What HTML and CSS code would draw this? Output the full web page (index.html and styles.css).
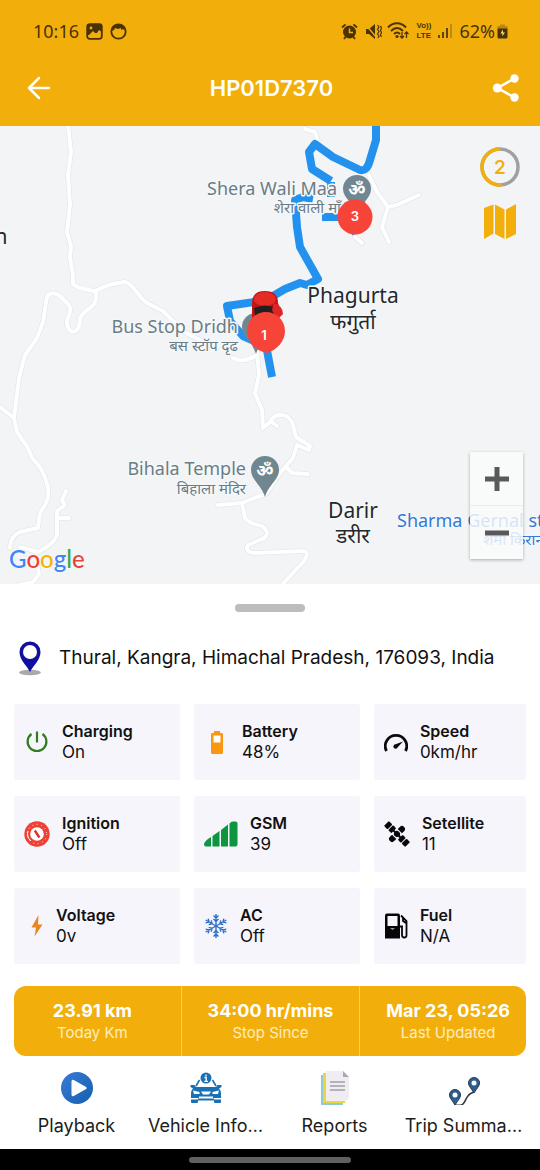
FILE: index.html
```html
<!DOCTYPE html>
<html lang="en">
<head>
<meta charset="utf-8">
<meta name="viewport" content="width=device-width, initial-scale=1">
<title>HP01D7370</title>
<link rel="stylesheet" href="styles.css">
</head>
<body>
<div class="screen">
  <header class="top">
    <div class="status">
      <span class="clock">10:16</span>
      <svg width="17" height="17" viewBox="0 0 17 17"><rect x="1.2" y="1.2" width="14.6" height="14.6" rx="2.5" fill="none" stroke="#4a3205" stroke-width="1.8"/><path d="M1 1h15v8l-3-2-2 3H9L7 8l-4 4-2 0z" fill="#4a3205"/><circle cx="5" cy="5" r="1.4" fill="#f2af0c"/></svg>
      <svg width="17" height="17" viewBox="0 0 17 17"><circle cx="8.500" cy="8.500" r="7.200" fill="none" stroke="#4a3205" stroke-width="1.8"/><path d="M2 8C3 3 4 2 8.500 1.500 13 2 14 3 15 8l-2-2-2 1V5l-3 1-3-1-1 2z" fill="#4a3205"/></svg>
      <span class="spacer"></span>
      <svg width="17" height="17" viewBox="0 0 17 17"><circle cx="8.500" cy="9" r="6.500" fill="#4a3205"/><path d="M1 4.500 4.500 1.300M16 4.500l-3.500-3.200M3 16l1.500-2M14 16l-1.500-2" stroke="#4a3205" stroke-width="1.800"/><path d="M8.500 5.500V9.500h3.500" fill="none" stroke="#f2af0c" stroke-width="1.500"/></svg>
      <svg class="gap-mute" width="17" height="17" viewBox="0 0 17 17"><path d="M1 6h3l6-5v15l-6-5H1z" fill="#4a3205"/><path d="m1 2 10 12" stroke="#f2af0c" stroke-width="1.200"/><path d="M12.500 2l1.500 2-1.500 2.500 1.500 2-1.500 2.500 1.500 2-1 2M15.500 3l1 2-1 2.500 1 2-1 2.500 1 2" fill="none" stroke="#4a3205" stroke-width="1.200"/></svg>
      <svg width="22" height="18" viewBox="0 0 22 18"><path d="M1 5.500C6-.2 14-.2 19 5.500M4 9c4-4 8-4 12 0M7 12c2-2 4-2 6 0" fill="none" stroke="#4a3205" stroke-width="1.900"/><circle cx="10" cy="14.500" r="1.600" fill="#4a3205"/><path d="M15 10v6m-2-2 2 2 2-2M19.500 16v-6m-2 2 2-2 2 2" fill="none" stroke="#4a3205" stroke-width="1.300"/></svg>
      <span class="volte"><span>Vo))</span><span>LTE</span></span>
      <svg width="14" height="16" viewBox="0 0 14 16"><path d="M1 12v3M5 9v6M9 5v10" stroke="#4a3205" stroke-width="1.700"/><path d="M13 1v14" stroke="#b78410" stroke-width="1.700"/></svg>
      <span class="percent">62%</span>
      <svg class="batt" width="11" height="16" viewBox="0 0 11 16"><path d="M3 1.500h5V3h2.500v3H.5V3H3z" fill="#b98712"/><path d="M.5 5.500h10V14a1.500 1.500 0 0 1-1.500 1.500H2A1.500 1.500 0 0 1 .5 14z" fill="#4a3205"/><path d="M6 6.500 3.500 10.500h2L5 13.500l3-4H6z" fill="#f7dc94"/></svg>
    </div>
    <div class="appbar">
      <button class="icon-btn" aria-label="Back"><svg width="24" height="24" viewBox="0 0 24 24" fill="none" stroke="#fff" stroke-width="2.500" stroke-linecap="round" stroke-linejoin="round"><path d="M22 12H2M12 2 2 12l10 10"/></svg></button>
      <h1 class="title">HP01D7370</h1>
      <button class="icon-btn" aria-label="Share"><svg width="28" height="28" viewBox="0 0 28 28" fill="#fff"><path d="M22.500 4.500 5.500 14l17 9.500" fill="none" stroke="#fff" stroke-width="2.500"/><circle cx="22.500" cy="4.500" r="4.200"/><circle cx="5.300" cy="14" r="4.500"/><circle cx="22.500" cy="23.500" r="4.200"/></svg></button>
    </div>
  </header>

  <main class="map">
    <svg class="canvas" viewBox="0 126 540 458" preserveAspectRatio="xMidYMid slice">
      <defs>
        <g id="roads" fill="none" stroke-linecap="round" stroke-linejoin="round">
          <path d="M68 124 71 152 68 175 70 205 67 232 71 246 70 258 73 275 73 284Q78 289 95 291 110 283 125 282C133 283 138 297 147 303L163 311 174 322 184 332 200 340"/>
          <path d="M95 291Q99 301 90 308 78 316 80 322 78 332 72 332 66 328 67 320 72 310 69 305L60 296Q51 290 47 297L43 322 37 338 25 355 19 378 14 418 17 432 28 448 32 458 40 467C47 480 53 495 43 508L40 513 38 528 20 532Q10 536 10 548M0 407l14 11"/>
          <path d="M66 491 62 500 65 505 57 511 57 535Q53 544 45 548L38 552 20 547M57 518h12M37 562l2 12-6 8-14 3"/>
          <path d="M233 358c8 5 16 2 24-3M257 350 259 375 255 393 262 410 263 428 270 422C275 412 289 412 293 425L296 437 310 446 309 450 297 445 293 458 280 473 266 494 257 497 242 503 218 505M272 422l5 4M287 468l5 5 16 1M242 503 245 518Q250 524 262 526 272 534 262 539L248 545Q244 552 255 553L305 551Q309 554 304 561L281 586"/>
          <path d="M305 129 315 132 318 142M367 171 377 192 388 207 397 205 410 199 419 195M388 207 382 227 389 242M355 237l7 6"/>
        </g>
      </defs>
      <rect y="126" width="540" height="458" fill="#f2f4f5"/>
      <use href="#roads" stroke="#dfe2e5" stroke-width="5"/>
      <use href="#roads" stroke="#fff" stroke-width="4"/>
      <g class="route">
        <path d="M376 120v20l-6 20q-3 12-10 10l-27-13-18-13-6 8 3 17 19 12M331 182v15M313 199l-10-2-8 3 2 27 3 20 18 32-11 6-7-2-15 6-12 7-12 5-34 5 3 15 13 15 20 9M322 217h28l6 17"/>
        <path d="m266 345 6 32"/>
      </g>
      <g class="place end">
        <text x="337" y="195">Shera Wali Maa</text><text class="hindi" x="341" y="213">शेरा वाली माँ</text>
        <text x="238" y="333">Bus Stop Dridh</text><text class="hindi" x="238" y="351">बस स्टॉप दृढ</text>
        <text x="246" y="475">Bihala Temple</text><text class="hindi" x="246" y="494">बिहाला मंदिर</text>
      </g>
      <g class="place town">
        <text x="353" y="303">Phagurta</text><text x="353" y="329">फगुर्ता</text>
        <text x="353" y="518">Darir</text><text x="353" y="543">डरीर</text>
        <text x="1" y="244">n</text>
      </g>
      <g class="place shop"><text x="397" y="527">Sharma Gernal st</text><text class="hindi" x="483" y="545">शर्मा किरान</text></g>
      <g fill="#708690">
        <path d="M343 189a14 14 0 1 1 28 0c0 9-9 13-14 25-4-12-14-16-14-25z"/>
        <path d="M251 470a14 14 0 1 1 28 0c0 10-10 14-14 27-4-13-14-17-14-27z"/>
        <path d="M242 327a14 14 0 1 1 28 0c0 9-10 14-14 27-4-13-14-18-14-27z"/>
      </g>
      <text class="om" x="357" y="196">ॐ</text><text class="om" x="265" y="477">ॐ</text>
      <path d="M252 303q0-12 13-12t13 12l4 12-30 6z" fill="#c41315"/>
      <ellipse cx="265" cy="299" rx="11" ry="7" fill="#e52b25"/>
      <path d="M254 308q11-5 23 0l-1 8h-21z" fill="#252020"/>
      <path d="M274 303q9 3 9 11l-6 6-5-10z" fill="#e22522"/>
      <circle cx="355" cy="217" r="17.500" fill="#f64438"/><path d="M247 331a19 19 0 1 1 38 0c0 10-8 19-18 22-11-2-20-11-20-22z" fill="#f64438"/>
      <text class="pin" x="355" y="221">3</text><text class="pin" x="264" y="340">1</text>
    </svg>
    <div class="ring">
      <svg width="40" height="40" viewBox="0 0 40 40" fill="none" stroke-width="3.500"><circle cx="20" cy="20" r="18" stroke="#a0a0a0"/><path d="M20 2a18 18 0 0 0 0 36h2" stroke="#f2af0c"/></svg>
      <span class="ring-num">2</span>
    </div>
    <button class="layers" aria-label="Map type"><svg width="34" height="36" viewBox="0 0 34 36" fill="#f2af0c"><path d="M1 4 10.500.5v29L1 35zM12 .5l9.500 5V35L12 30zM23 5.500 33 0v30l-10 5z"/></svg></button>
    <div class="zoom">
      <button class="zoom-btn" aria-label="Zoom in"><svg width="24" height="24" viewBox="0 0 24 24"><path d="M12 0v24M0 12h24" stroke="#595959" stroke-width="5"/></svg></button>
      <button class="zoom-btn" aria-label="Zoom out"><svg width="24" height="24" viewBox="0 0 24 24"><path d="M0 12h24" stroke="#595959" stroke-width="5"/></svg></button>
    </div>
    <div class="google"><span class="b">G</span><span class="r">o</span><span class="y">o</span><span class="b">g</span><span class="g">l</span><span class="r">e</span></div>
  </main>

  <section class="sheet">
    <div class="handle"></div>
    <div class="address">
      <svg width="24" height="36" viewBox="0 0 24 36"><ellipse cx="12" cy="32.500" rx="11" ry="2.800" fill="#aaa"/><path d="M12 1.500A10.500 10.500 0 0 0 1.500 12C1.500 20 8.500 25 12 32c3.500-7 10.500-12 10.500-20A10.500 10.500 0 0 0 12 1.500z" fill="#1010a0"/><circle cx="12" cy="12" r="7" fill="#fff"/></svg>
      <span>Thural, Kangra, Himachal Pradesh, 176093, India</span>
    </div>
    <div class="cards">
      <div class="card"><svg width="26" height="26" viewBox="0 0 26 26" fill="none" stroke="#2f7d1c" stroke-width="2.200"><path d="M13 2.500v11M7.500 5a9.400 9.400 0 1 0 11 0"/></svg><div><h2>Charging</h2><p>On</p></div></div>
      <div class="card"><svg width="26" height="26" viewBox="0 0 26 26"><path d="M10 2h6v2h1.500Q19 4 19 5.500v18Q19 25 17.500 25h-9Q7 25 7 23.500v-18Q7 4 8.500 4H10z" fill="#fa960f"/><path d="M9.500 6.500h7v7h-7z" fill="#fff"/></svg><div><h2>Battery</h2><p>48%</p></div></div>
      <div class="card"><svg width="24" height="26" viewBox="0 0 24 26"><path d="M2.500 22A10.700 10.700 0 1 1 21.500 22" fill="none" stroke="#0a0a0f" stroke-width="2.800"/><path d="M19 12.500 13.500 18.500a2.200 2.200 0 1 1-2-3.200z" fill="#0a0a0f"/></svg><div><h2>Speed</h2><p>0km/hr</p></div></div>
      <div class="card"><svg width="26" height="26" viewBox="0 0 26 26"><circle cx="13" cy="13" r="12.700" fill="#ed4137"/><circle cx="13" cy="13" r="9.700" fill="none" stroke="#fff" stroke-width=".9" stroke-dasharray="1 3.500"/><circle cx="13" cy="13" r="6.800" fill="#fff"/><path d="m10.800 9.500 4.600 7" stroke="#d8372d" stroke-width="2.400"/><path d="M4 10a9.500 9.500 0 0 0 3 10" stroke="#fff" fill="none"/></svg><div><h2>Ignition</h2><p>Off</p></div></div>
      <div class="card"><svg width="34" height="26" viewBox="0 0 34 26" fill="#0b963f"><path d="M7 16v9.500H2Q0 25.500 0 23.500 0 20 7 16zM8.500 15l7-5v15.500h-7zM17 9l7-5.500v22h-7zM25.500 2.500Q27 .5 29 .5h2.500Q33.500.5 33.500 2.500v21q0 2-2 2h-6z"/></svg><div><h2>GSM</h2><p>39</p></div></div>
      <div class="card"><svg width="26" height="26" viewBox="0 0 26 26"><g transform="rotate(45 13 13)" fill="#08080c"><rect x="-2" y="9.500" width="5" height="7" rx="1"/><rect x="4" y="9.500" width="4.500" height="7" rx="1"/><rect x="17.500" y="9.500" width="4.500" height="7" rx="1"/><rect x="23" y="9.500" width="5" height="7" rx="1"/><circle cx="13" cy="13" r="3"/><path d="M10 9V6q0-3 3-3t3 3v3zM10 17v3q0 3 3 3t3-3v-3zM8 12h10v2H8z"/></g></svg><div><h2>Setellite</h2><p>11</p></div></div>
      <div class="card"><svg width="20" height="26" viewBox="0 0 20 26"><path d="M14.500 2 7.500 14.500H12L10.500 23.500l8-12h-4.500z" fill="#ea8620"/></svg><div><h2>Voltage</h2><p>0v</p></div></div>
      <div class="card"><svg width="24" height="26" viewBox="0 0 24 26"><defs><path id="arm" d="M12 13V1M9.500 2.500 12 5l2.500-2.500M9.500 6 12 8.500 14.500 6"/></defs><g fill="none" stroke="#2f6fc6" stroke-width="1.400"><use href="#arm"/><use href="#arm" transform="rotate(60 12 13)"/><use href="#arm" transform="rotate(120 12 13)"/><use href="#arm" transform="rotate(180 12 13)"/><use href="#arm" transform="rotate(240 12 13)"/><use href="#arm" transform="rotate(300 12 13)"/></g></svg><div><h2>AC</h2><p>Off</p></div></div>
      <div class="card"><svg width="24" height="26" viewBox="0 0 24 26"><path d="M3 .5h11q2 0 2 2v23H1v-23q0-2 2-2z" fill="#060608"/><path d="M3.500 3h10v10h-10z" fill="#f6f5fc"/><path d="M16 13.500h2V22q0 2.500 2.300 2.500T22.500 22V8L17 2.500M19 4.500V8l3 2" fill="none" stroke="#060608" stroke-width="1.800"/><path d="m6 15 2.500 2 2.500-2z" fill="#999"/></svg><div><h2>Fuel</h2><p>N/A</p></div></div>
    </div>
    <div class="summary">
      <div class="cell"><strong>23.91 km</strong><span>Today Km</span></div>
      <div class="cell"><strong>34:00 hr/mins</strong><span>Stop Since</span></div>
      <div class="cell"><strong>Mar 23, 05:26</strong><span>Last Updated</span></div>
    </div>
    <nav class="tabs">
      <a class="tab" href="#playback"><svg width="34" height="34" viewBox="0 0 34 34"><defs><linearGradient id="pb" x2="1" y2="1"><stop stop-color="#3a7bd8"/><stop offset="1" stop-color="#1460ae"/></linearGradient></defs><circle cx="17" cy="17" r="16" fill="url(#pb)"/><path d="M11.500 10.500q0-2.500 2.200-1.400l12 6.600q2 1.300 0 2.600l-12 6.600q-2.200 1.100-2.200-1.400z" fill="#fff"/></svg><span>Playback</span></a>
      <a class="tab" href="#vehicle"><svg width="34" height="34" viewBox="0 0 34 34" fill="#1a70b5"><circle cx="17" cy="7" r="5.500"/><path d="M17 3.500v1.800M15.500 6.500H17.200V10M15.300 10.300h3.600" fill="none" stroke="#fff" stroke-width="1.300"/><path d="M10.500 9 7 15M23.500 9 27 15" stroke="#1a70b5" stroke-width="1.600"/><path d="M1.500 14h4l1.500 2h20l1.500-2h4v2l-2.500 1.500q2 2 2 5V27h-30v-4.500q0-3 2-5L1.500 16z"/><path d="M4 19.500 10.500 21v2H5zM30 19.500 23.500 21v2H29zM12 20.500h10l-2 3h-6zM10 25.500h14v1.500H10z" fill="#fff"/><path d="M2 28.500h7v2.500q0 1-1 1H3q-1 0-1-1zM25 28.500h7v2.500q0 1-1 1h-5q-1 0-1-1z"/><path d="M9 27.500h16v2H9z"/></svg><span>Vehicle Info…</span></a>
      <a class="tab" href="#reports"><svg width="34" height="34" viewBox="0 0 34 34"><path d="M3 4h22v30H3z" fill="#8ec9dc"/><path d="M5 2h22v30H5z" fill="#e8d840"/><path d="M8 0h17l6 6v21l-3 3H8z" fill="#efedf2"/><path d="M25 0v6h6z" fill="#aaa7ae"/><path d="M12 11h15M12 15h15M12 19h15" stroke="#a09ea8" stroke-width="1.300"/></svg><span>Reports</span></a>
      <a class="tab" href="#trips"><svg width="34" height="34" viewBox="0 0 34 34"><path d="M8 35c11 2 9-5 13-9 1-2 3-3 6-4" fill="none" stroke="#33383e" stroke-width="1.600" transform="translate(0 -1)"/><g fill="#2c5f8e" stroke="#27394e"><path d="M8 34c-3-5-5.500-7-5.500-10a5.500 5.500 0 0 1 11 0c0 3-2.500 5-5.500 10zM27 22c-3-5-5.500-7-5.500-10a5.500 5.500 0 0 1 11 0c0 3-2.500 5-5.500 10z"/></g><circle cx="8" cy="24" r="2.500" fill="#fff"/><circle cx="27" cy="12" r="2.500" fill="#fff"/></svg><span>Trip Summa…</span></a>
    </nav>
  </section>
  <div class="gesture"><span class="pill"></span></div>
</div>
</body>
</html>
```
FILE: styles.css
```css
* { box-sizing: border-box; }
body { margin: 0; font-family: Inter, "Open Sans", sans-serif; color: #111; background: #fff; }
h1, h2, p { margin: 0; }
button { border: 0; padding: 0; background: none; display: flex; align-items: center; justify-content: center; }
svg { display: block; flex: none; }
.screen { min-height: 100vh; display: flex; flex-direction: column; }

.top { background: #f2af0c; }
.status { display: flex; align-items: center; gap: 7px; height: 50px; padding: 12px 32px 0 33px; color: #4a3205; font-family: "Noto Sans", sans-serif; font-size: 18px; }
.spacer { flex: 1; }
.gap-mute { margin-right: -2px; }
.volte { display: grid; font-family: "Liberation Sans", sans-serif; font-size: 8px; line-height: 10px; font-weight: 700; }
.batt { margin-left: -5px; }
.appbar { display: flex; align-items: center; justify-content: space-between; height: 76px; padding: 0 20px 0 27px; }
.title { color: #fff; font-size: 22px; font-weight: 600; }

.map { position: relative; flex: 1; min-height: 300px; overflow: hidden; background: #f2f4f5; }
.canvas { position: absolute; inset: 0; width: 100%; height: 100%; }
.route { fill: none; stroke: #2392ee; stroke-width: 8px; stroke-linejoin: round; stroke-linecap: butt; }
.place { font-family: "Noto Sans", sans-serif; font-size: 18px; fill: #6c7c84; stroke: #f5f8fa; stroke-width: 3px; paint-order: stroke; stroke-linejoin: round; }
.place .hindi { font-size: 15px; }
.end { text-anchor: end; }
.town { font-size: 21px; fill: #26282a; text-anchor: middle; }
.shop { fill: #3578d4; }
.om { font-family: "Noto Sans", sans-serif; font-size: 17px; font-weight: 700; fill: #fff; text-anchor: middle; }
.pin { font-size: 13px; font-weight: 600; fill: #fff; text-anchor: middle; }
.ring { position: absolute; top: 21px; right: 20px; display: grid; place-items: center; }
.ring > * { grid-area: 1 / 1; }
.ring-num { color: #f2af0c; font-size: 19px; font-weight: 600; }
.layers { position: absolute; top: 78px; right: 23px; }
.zoom { position: absolute; right: 17px; bottom: 25px; display: flex; flex-direction: column; gap: 1px; background: rgba(225, 228, 230, .4); box-shadow: 0 1px 3px rgba(0, 0, 0, .3); }
.zoom-btn { width: 53px; height: 53px; background: rgba(255, 255, 255, .7); }
.google { position: absolute; left: 9px; bottom: 9px; font-family: Lato, sans-serif; font-size: 24px; line-height: 32px; font-weight: 500; text-shadow: 0 0 2px #fff; }
.b { color: #4285f4; }
.r { color: #ea4335; }
.y { color: #f4b400; }
.g { color: #34a853; }

.sheet { display: flex; flex-direction: column; padding: 20px 14px 0; }
.handle { align-self: center; width: 70px; height: 8px; border-radius: 4px; background: #bcbcbc; }
.address { display: flex; align-items: center; gap: 17px; min-height: 36px; margin: 28px 4px; font-size: 19px; line-height: 24px; }
.cards { display: grid; grid-template-columns: 12fr 12fr 11fr; gap: 16px 14px; }
.card { display: flex; align-items: center; gap: 12px; min-height: 76px; padding: 0 10px; background: #f6f5fc; border-radius: 3px; }
.card h2 { font-size: 16px; line-height: 21px; font-weight: 600; }
.card p { font-size: 17px; line-height: 21px; }
.summary { display: grid; grid-template-columns: 14fr 15fr 14fr; margin-top: 22px; background: #f2af0c; border-radius: 12px; color: #fff; text-align: center; }
.cell { display: flex; flex-direction: column; justify-content: center; min-height: 70px; padding-top: 2px; }
.cell + .cell { border-left: 1px solid #f9cd62; }
.cell:first-child { padding-right: 10px; }
.cell:last-child { padding-left: 10px; }
.cell strong { font-size: 18px; line-height: 22px; font-weight: 700; }
.cell span { font-size: 15px; line-height: 22px; color: #fdecc0; }
.tabs { display: grid; grid-template-columns: repeat(4, 1fr); height: 93px; margin: 0 -2px; }
.tab { display: flex; flex-direction: column; align-items: center; gap: 9px; padding-top: 15px; color: #1c1c1c; text-decoration: none; font-size: 18px; line-height: 24px; white-space: nowrap; }
.gesture { display: flex; align-items: center; justify-content: center; height: 21px; background: #000; }
.pill { width: 30%; height: 6px; border-radius: 3px; background: #606060; }
```
